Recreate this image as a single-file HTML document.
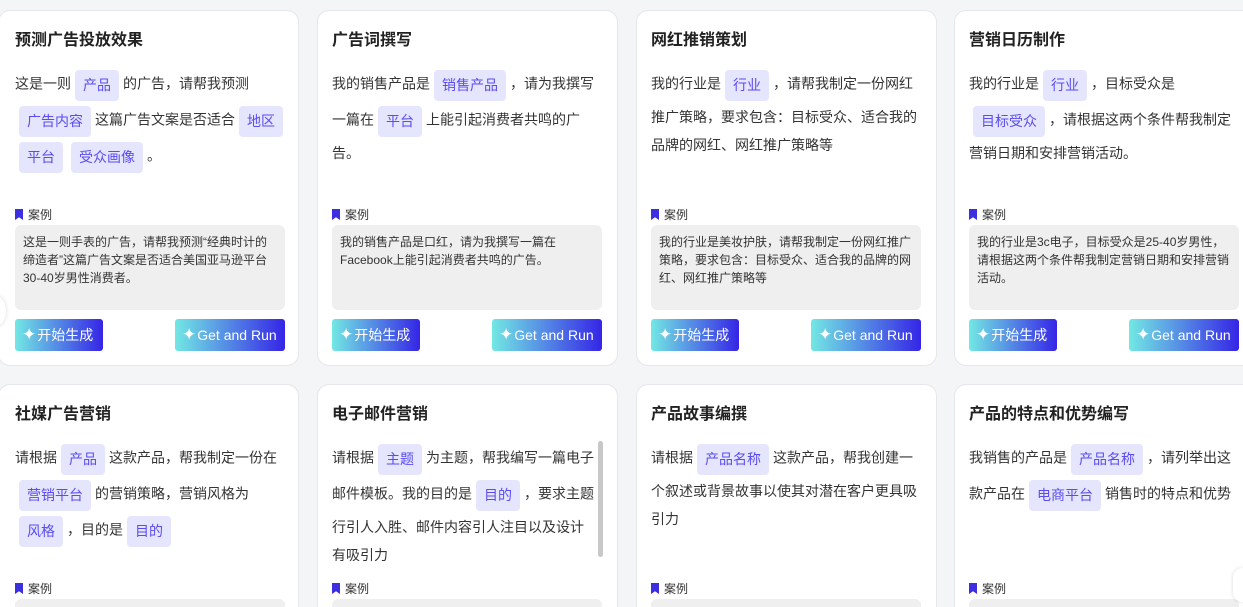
<!DOCTYPE html>
<html style="width:1243px;height:607px;overflow:hidden"><head><meta charset="utf-8"><style>
*{box-sizing:border-box;margin:0;padding:0}
body{width:1243px;height:607px;overflow:hidden;background:#f4f5f7;font-family:"Liberation Sans","Noto Sans CJK SC",sans-serif;position:relative;color:#333}
.card{position:absolute;width:301px;height:356px;background:#fff;border:1px solid #e6e7eb;border-radius:12px;overflow:hidden}
.row2{height:223px;border-bottom:none;border-radius:12px 12px 0 0}
.t{position:absolute;left:14px;top:19px;font-size:16px;font-weight:bold;color:#222;line-height:22px}
.b{position:absolute;left:14px;top:56px;width:275px;font-size:14px;line-height:28px;color:#333}
.g{display:inline-block;height:31px;line-height:31px;padding:0 8px;margin:2.5px 4px;background:#e5e5fd;color:#5a4cf0;border-radius:4px;vertical-align:middle}
.c{position:absolute;left:14px;top:196px;font-size:12px;color:#333;line-height:16px}
.c i{display:inline-block;width:8px;height:11px;background:#3b2fe0;margin-right:5px;vertical-align:-1px;clip-path:polygon(0 0,100% 0,100% 100%,50% 75%,0 100%)}
.e{position:absolute;left:14px;top:214px;width:270px;height:85px;background:#efefef;border-radius:6px;padding:8px 8px;font-size:12px;line-height:18px;color:#333}
.btn{position:absolute;top:308px;height:32px;border-radius:3px;background:linear-gradient(90deg,#72e8e4,#3525e6);color:#fff;font-size:14px;line-height:32px;padding-left:7px}
.btn b{font-weight:normal;font-size:17px;margin-right:1px}
.l{left:14px;width:88px}.r{left:174px;width:110px}
</style></head><body>
<div class="card" style="left:-2px;top:10px"><div class="t" style="left:16px">预测广告投放效果</div><div class="b" style="left:16px">这是一则<span class="g">产品</span>的广告，请帮我预测<span class="g">广告内容</span>这篇广告文案是否适合<span class="g">地区</span><span class="g">平台</span><span class="g">受众画像</span>。</div><div class="c" style="left:16px"><i></i>案例</div><div class="e" style="left:16px">这是一则手表的广告，请帮我预测“经典时计的缔造者”这篇广告文案是否适合美国亚马逊平台30-40岁男性消费者。</div><div class="btn l" style="left:16px"><b>✦</b>开始生成</div><div class="btn r" style="left:176px"><b>✦</b>Get and Run</div></div>
<div class="card" style="left:317px;top:10px"><div class="t">广告词撰写</div><div class="b">我的销售产品是<span class="g">销售产品</span>，请为我撰写一篇在<span class="g">平台</span>上能引起消费者共鸣的广告。</div><div class="c"><i></i>案例</div><div class="e">我的销售产品是口红，请为我撰写一篇在Facebook上能引起消费者共鸣的广告。</div><div class="btn l"><b>✦</b>开始生成</div><div class="btn r"><b>✦</b>Get and Run</div></div>
<div class="card" style="left:636px;top:10px"><div class="t">网红推销策划</div><div class="b">我的行业是<span class="g">行业</span>，请帮我制定一份网红推广策略，要求包含：目标受众、适合我的品牌的网红、网红推广策略等</div><div class="c"><i></i>案例</div><div class="e">我的行业是美妆护肤，请帮我制定一份网红推广策略，要求包含：目标受众、适合我的品牌的网红、网红推广策略等</div><div class="btn l"><b>✦</b>开始生成</div><div class="btn r"><b>✦</b>Get and Run</div></div>
<div class="card" style="left:954px;top:10px"><div class="t">营销日历制作</div><div class="b">我的行业是<span class="g">行业</span>，目标受众是<span class="g">目标受众</span>，请根据这两个条件帮我制定营销日期和安排营销活动。</div><div class="c"><i></i>案例</div><div class="e">我的行业是3c电子，目标受众是25-40岁男性，请根据这两个条件帮我制定营销日期和安排营销活动。</div><div class="btn l"><b>✦</b>开始生成</div><div class="btn r"><b>✦</b>Get and Run</div></div>

<div class="card row2" style="left:-2px;top:384px"><div class="t" style="left:16px">社媒广告营销</div><div class="b" style="left:16px">请根据<span class="g">产品</span>这款产品，帮我制定一份在<span class="g">营销平台</span>的营销策略，营销风格为<span class="g">风格</span>，目的是<span class="g">目的</span></div><div class="c" style="left:16px"><i></i>案例</div><div class="e" style="left:16px"></div></div>
<div class="card row2" style="left:317px;top:384px"><div class="t">电子邮件营销</div><div class="b" style="width:264px">请根据<span class="g">主题</span>为主题，帮我编写一篇电子邮件模板。我的目的是<span class="g">目的</span>，要求主题行引人入胜、邮件内容引人注目以及设计有吸引力</div><div style="position:absolute;left:280px;top:56px;width:5px;height:116px;background:#c8c8c8;border-radius:3px"></div><div class="c"><i></i>案例</div><div class="e"></div></div>
<div class="card row2" style="left:636px;top:384px"><div class="t">产品故事编撰</div><div class="b">请根据<span class="g">产品名称</span>这款产品，帮我创建一个叙述或背景故事以使其对潜在客户更具吸引力</div><div class="c"><i></i>案例</div><div class="e"></div></div>
<div class="card row2" style="left:954px;top:384px"><div class="t">产品的特点和优势编写</div><div class="b">我销售的产品是<span class="g">产品名称</span>，请列举出这款产品在<span class="g">电商平台</span>销售时的特点和优势</div><div class="c"><i></i>案例</div><div class="e"></div></div>
<div style="position:absolute;left:-14px;top:296px;width:20px;height:30px;border-radius:50%;background:#fff;box-shadow:0 0 4px rgba(0,0,0,.15)"></div>
<div style="position:absolute;left:1233px;top:568px;width:10px;height:34px;border-radius:17px 0 0 17px;background:#fff;box-shadow:0 0 4px rgba(0,0,0,.15)"></div>
</body></html>
